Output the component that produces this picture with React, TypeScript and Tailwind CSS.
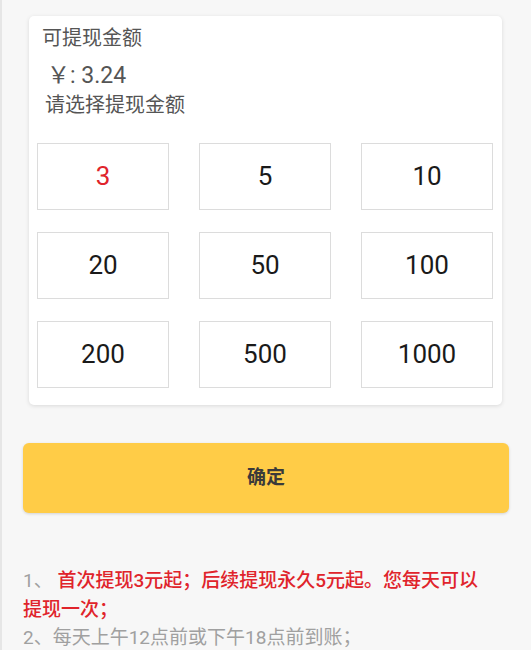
import React, { useState } from 'react';

const amounts = [3, 5, 10, 20, 50, 100, 200, 500, 1000];

const App: React.FC = () => {
  const [selected, setSelected] = useState(3);

  return (
    <div
      className="min-h-[650px] w-[531px] bg-[#f7f7f7] border-l-2 border-[#e6e6e6] overflow-hidden"
      style={{ fontFamily: 'Roboto, "Noto Sans CJK SC", sans-serif' }}
    >
      <div className="pt-[16px] pl-[27px] pr-[29px]">
        <div className="bg-white rounded-[5px] shadow-[0_1px_4px_rgba(0,0,0,0.12)] pl-[8px] pr-[9px] pt-[8px] pb-[17px]">
          <div className="pl-[5px] text-[20px] leading-[28px] text-[#555]">可提现金额</div>
          <div className="pl-[10px] mt-[10px] text-[23px] leading-[28px] text-[#555]">￥: 3.24</div>
          <div className="pl-[8px] mt-[1px] text-[20px] leading-[28px] text-[#555]">请选择提现金额</div>
          <div className="mt-[24px] grid grid-cols-3 gap-x-[30px] gap-y-[22px]">
            {amounts.map((a) => (
              <button
                key={a}
                onClick={() => setSelected(a)}
                className={`h-[67px] border border-[#dcdcdc] bg-white flex items-center justify-center text-[26px] ${
                  selected === a ? 'text-[#e0242b]' : 'text-[#1a1a1a]'
                }`}
              >
                {a}
              </button>
            ))}
          </div>
        </div>

        <button className="mt-[38px] -ml-[6px] w-[486px] h-[70px] rounded-[6px] bg-[#ffcc47] shadow-[0_1px_3px_rgba(0,0,0,0.15)] text-[19px] font-bold text-[#3a3a3a]">
          确定
        </button>
      </div>

      <div className="mt-[54px] pl-[21px] w-[486px] text-[19px] leading-[28.5px]">
        <p className="text-[#a0a0a0]">
          1、 <span className="text-[#e0242b] font-medium">首次提现3元起；后续提现永久5元起。您每天可以提现一次；</span>
        </p>
        <p className="text-[#a0a0a0]">2、每天上午12点前或下午18点前到账；</p>
      </div>
    </div>
  );
};

export default App;
